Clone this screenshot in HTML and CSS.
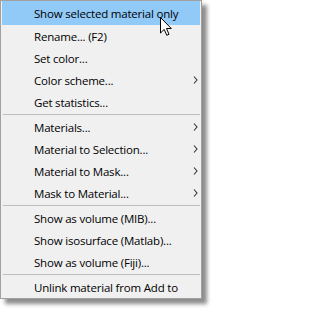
FILE: index.html
```html
<!DOCTYPE html>
<html>
<head>
<meta charset="utf-8">
<link rel="stylesheet" href="styles.css">
</head>
<body>
<div class="screen">
  <div class="menu">
    <div class="item hot"><span>Show selected material only</span></div>
    <div class="item"><span>Rename... (F2)</span></div>
    <div class="item"><span>Set color...</span></div>
    <div class="item"><span>Color scheme...</span><svg class="chev" width="5" height="8" viewBox="0 0 5 8"><polyline points="1,0.5 4,4 1,7.5"/></svg></div>
    <div class="item"><span>Get statistics...</span></div>
    <div class="sep"></div>
    <div class="item"><span>Materials...</span><svg class="chev" width="5" height="8" viewBox="0 0 5 8"><polyline points="1,0.5 4,4 1,7.5"/></svg></div>
    <div class="item"><span>Material to Selection...</span><svg class="chev" width="5" height="8" viewBox="0 0 5 8"><polyline points="1,0.5 4,4 1,7.5"/></svg></div>
    <div class="item"><span>Material to Mask...</span><svg class="chev" width="5" height="8" viewBox="0 0 5 8"><polyline points="1,0.5 4,4 1,7.5"/></svg></div>
    <div class="item"><span>Mask to Material...</span><svg class="chev" width="5" height="8" viewBox="0 0 5 8"><polyline points="1,0.5 4,4 1,7.5"/></svg></div>
    <div class="sep"></div>
    <div class="item"><span>Show as volume (MIB)...</span></div>
    <div class="item"><span>Show isosurface (Matlab)...</span></div>
    <div class="item"><span>Show as volume (Fiji)...</span></div>
    <div class="sep"></div>
    <div class="item"><span>Unlink material from Add to</span></div>
  </div>
  <svg class="cursor" width="12" height="19" viewBox="0 0 12 19">
    <polygon points="0.5,0.5 0.5,16 4.2,12.4 6.8,18.3 9,17.3 6.5,11.5 11.3,11.5"/>
  </svg>
</div>
</body>
</html>
```
FILE: styles.css
```css
body {
  margin: 0;
  background: #ffffff;
  font-family: "Open Sans", "Noto Sans", sans-serif;
  font-size: 11.5px;
  letter-spacing: -0.2px;
  color: #000;
}

.screen {
  position: relative;
  width: 215px;
  height: 312px;
}

.menu {
  width: 198px;
  border: 1px solid #a0a0a0;
  background: #f0f0f0;
  padding: 0 1px;
  display: flex;
  flex-direction: column;
  box-shadow: 5px 5px 4px rgba(0, 0, 0, 0.45);
}

.item {
  height: 22px;
  display: flex;
  align-items: center;
  justify-content: space-between;
  padding-left: 32px;
  padding-right: 2px;
  white-space: nowrap;
}

.item span {
  padding-top: 1px;
}

.item.hot {
  height: 24px;
  background: #91c9f7;
}

.chev {
  fill: none;
  stroke: #333;
  stroke-width: 1.1;
}

.sep {
  height: 1px;
  background: #bdbdbd;
  margin: 1px 0 1px 1px;
}

.cursor {
  position: absolute;
  left: 160px;
  top: 17px;
}

.cursor polygon {
  fill: #ffffff;
  stroke: #000000;
  stroke-width: 1;
  stroke-linejoin: miter;
}
```
